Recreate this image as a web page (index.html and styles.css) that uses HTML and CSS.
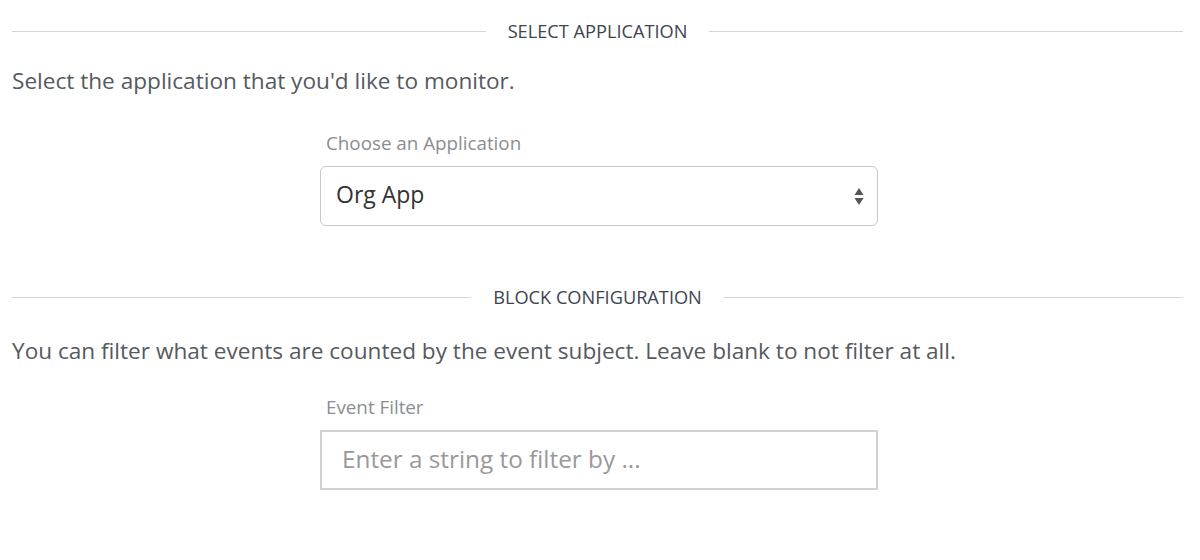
FILE: index.html
```html
<!DOCTYPE html>
<html>
<head>
<meta charset="utf-8">
<link rel="stylesheet" href="styles.css">
</head>
<body>
<div class="page">
  <div class="divider"><span class="divider-text">SELECT APPLICATION</span></div>
  <p class="intro intro-first">Select the application that you'd like to monitor.</p>
  <div class="field field-first">
    <label class="field-label">Choose an Application</label>
    <div class="select">
      <span class="select-value">Org App</span>
      <svg class="select-arrows" width="10" height="20" viewBox="0 0 10 20"><path d="M5 2 L9.5 9 H0.5 Z" fill="#555"/><path d="M0.5 12 H9.5 L5 19 Z" fill="#555"/></svg>
    </div>
  </div>
  <div class="divider divider-second"><span class="divider-text">BLOCK CONFIGURATION</span></div>
  <p class="intro intro-second">You can filter what events are counted by the event subject. Leave blank to not filter at all.</p>
  <div class="field field-second">
    <label class="field-label">Event Filter</label>
    <div class="input"><span class="placeholder">Enter a string to filter by ...</span></div>
  </div>
</div>
</body>
</html>
```

FILE: styles.css
```css
html, body {
  margin: 0;
  padding: 0;
  background: #fff;
}
body {
  font-family: "Open Sans", "Liberation Sans", sans-serif;
}
.page {
  width: 1171px;
  margin-left: 12px;
  display: flex;
  flex-direction: column;
  padding-top: 19px;
}
.divider {
  display: flex;
  align-items: center;
  gap: 22px;
  height: 24px;
}
.divider::before, .divider::after {
  content: "";
  flex: 1;
  height: 1px;
  background: #d4d4d4;
}
.divider-text {
  font-size: 18.2px;
  color: #3d4450;
  line-height: 24px;
}
.intro {
  margin: 0;
  font-size: 22.6px;
  line-height: 24px;
  color: #555a60;
}
.intro-first { margin-top: 26px; }
.intro-second { margin-top: 30px; }
.field {
  align-self: flex-start;
  margin-left: 308px;
  width: 558px;
  display: flex;
  flex-direction: column;
}
.field-first { margin-top: 40px; }
.field-second { margin-top: 34px; }
.field-label {
  font-size: 18.8px;
  line-height: 20px;
  color: #8a8d91;
  margin-left: 6px;
  margin-bottom: 13px;
}
.select {
  height: 60px;
  box-sizing: border-box;
  border: 1px solid #c8c8c8;
  border-radius: 6px;
  display: flex;
  align-items: center;
  justify-content: space-between;
  padding: 0 13px 0 15px;
}
.select-value {
  font-size: 23px;
  color: #333;
  margin-top: -4px;
}
.select-arrows { display: block; }
.divider-second { margin-top: 59px; }
.input {
  height: 60px;
  box-sizing: border-box;
  border: 2px solid #d2d2d2;
  display: flex;
  align-items: center;
  padding: 0 20px;
}
.placeholder {
  font-size: 24.3px;
  color: #999;
  margin-top: -3px;
}
```
